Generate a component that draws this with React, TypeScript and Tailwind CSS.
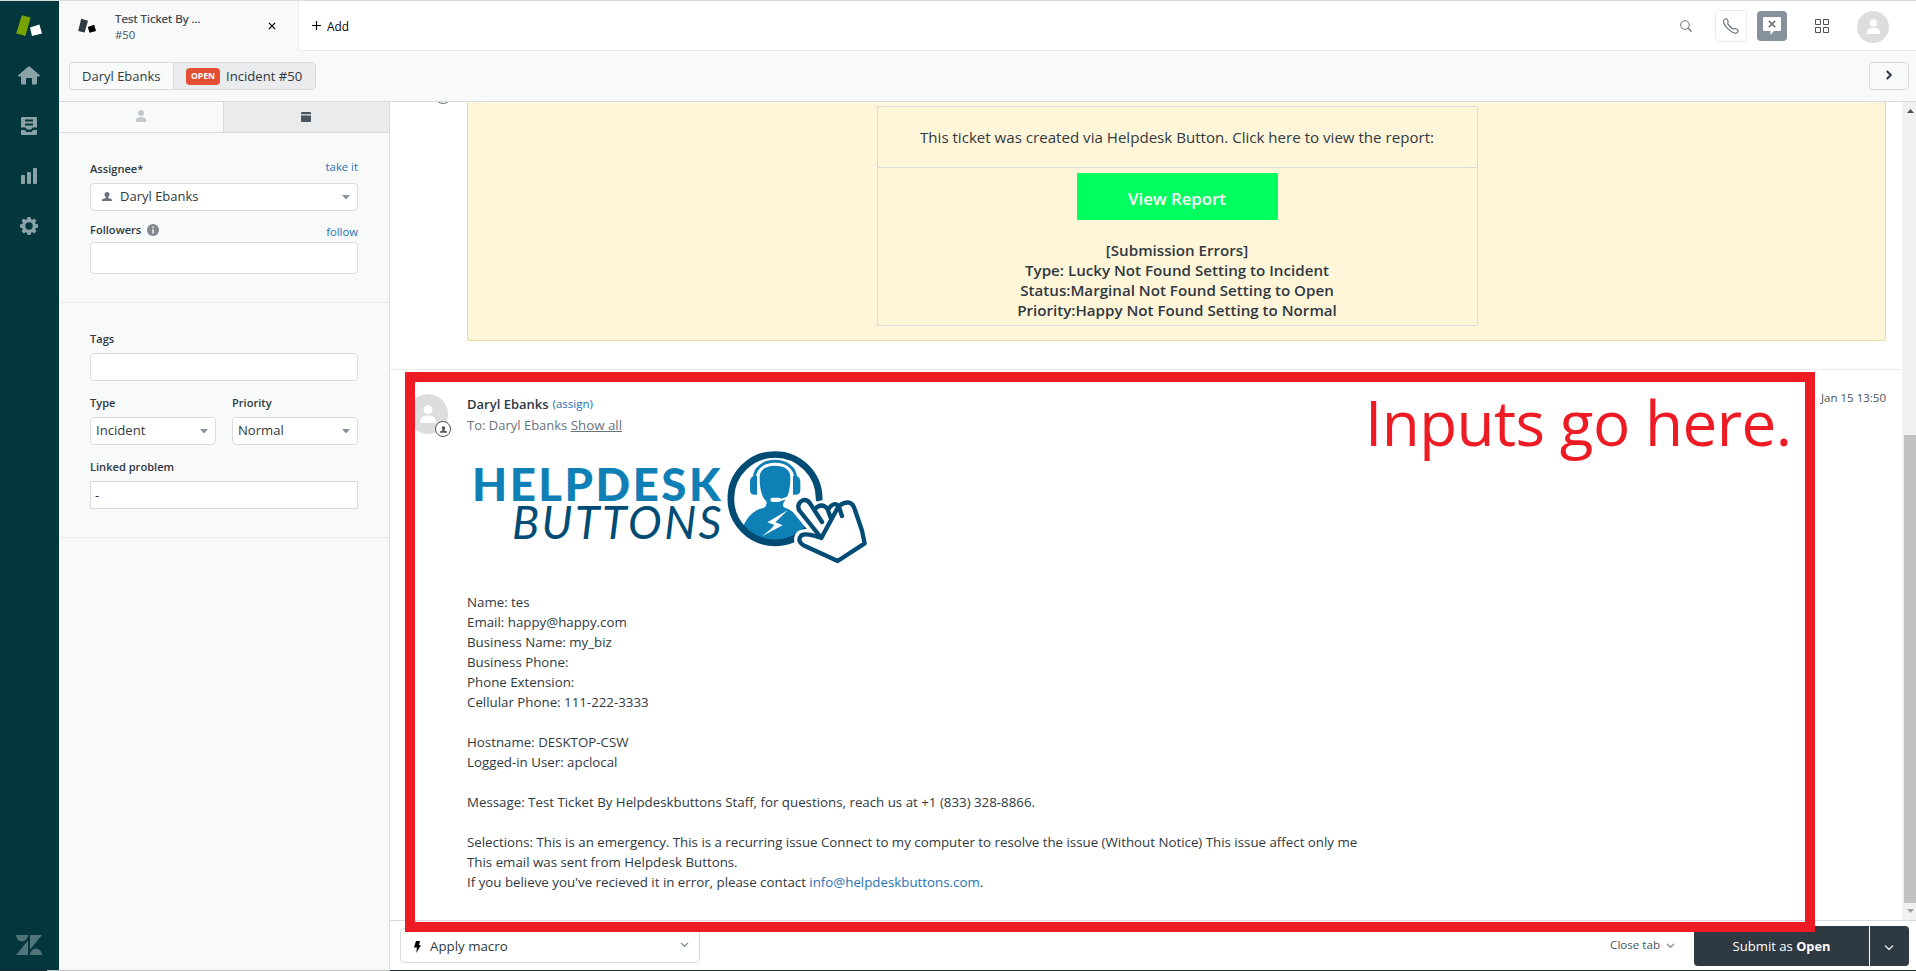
import React from 'react';

function Sidebar() {
  return (
    <nav className="flex w-[59px] shrink-0 flex-col items-center bg-[#03363d] pr-px">
      <svg className="mt-[13px] h-6 w-7 shrink-0" viewBox="15 14 28 24">
        <path d="M21.8 15.2 30.6 17.6 25.4 36 16.2 33.4z" fill="#78a300" />
        <path d="M30 27.5 39.4 24.6 42 33.4 32 36z" fill="#fff" />
      </svg>
      <svg className="mt-[26px] h-6 w-6 shrink-0" viewBox="0 0 24 24" fill="#8ba3a6">
        <path d="M12 2.5c.5 0 .9.2 1.3.5l9.2 8c.7.7.4 1.5-.6 1.5H20V19c0 .8-.6 1.5-1.500 1.500H15v-5.500c0-.6-.4-1-1-1h-4c-.6 0-1 .4-1 1v5.500H5.500C4.600 20.500 4 19.800 4 19v-6.500H2.100c-1 0-1.300-.8-.6-1.500l9.200-8c.4-.3.8-.5 1.300-.5z" />
      </svg>
      <svg className="mt-[26px] h-6 w-6 shrink-0" viewBox="0 0 24 24" fill="#8ba3a6">
        <path d="M5 3h14a1 1 0 0 1 1 1v9.500h-4.500l-1.500 2h-4l-1.500-2H4V4a1 1 0 0 1 1-1z" />
        <path d="M4 16h4l1.500 2h5l1.500-2h4v4a1 1 0 0 1-1 1H5a1 1 0 0 1-1-1z" />
        <path d="M8 5.500h8v2H8zM8 9.500h8v2H8z" fill="#03363d" />
      </svg>
      <svg className="mt-[25px] h-6 w-6 shrink-0" viewBox="0 0 24 24" fill="#8ba3a6">
        <rect x="4" y="12" width="4" height="9" rx="1" />
        <rect x="10" y="9" width="4" height="12" rx="1" />
        <rect x="16" y="5" width="4" height="16" rx="1" />
      </svg>
      <svg className="mt-[27px] h-6 w-6 shrink-0" viewBox="-12 -12 24 24">
        <g fill="#8ba3a6">
          {[0, 45, 90, 135].map((a) => (
            <path key={a} d="M-2.200 -6 -1.500 -9h3l.7 3v12l-.7 3h-3l-.7 -3z" transform={`rotate(${a})`} />
          ))}
        </g>
        <circle r="5.300" fill="#03363d" stroke="#8ba3a6" strokeWidth="3.200" />
      </svg>
      <svg className="mt-auto mb-[15px] h-5 w-[26px] shrink-0" viewBox="0 0 26 20" fill="#507479">
        <path d="M0 0h12a6 6.500 0 0 1-12 0zM14 0h12L14 14.500zM12 5.500V20H0zM14 20a6 6.500 0 0 1 12 0z" />
      </svg>
    </nav>
  );
}

function Person({ className }: { className: string }) {
  return (
    <svg className={className} viewBox="0 0 12 12" fill="currentColor">
      <circle cx="6" cy="3.100" r="3" />
      <path d="M.8 12v-1.600C.8 8.300 3 7 6 7s5.200 1.300 5.200 3.400V12z" />
    </svg>
  );
}

function Bust({ className }: { className: string }) {
  return (
    <svg className={className} viewBox="0 0 10 9" fill="currentColor">
      <path d="M5 0c1.600 0 2.500 1 2.500 2.500 0 1.200-.6 2-1.200 2.600v.8l3 1.100c.5.200.7.500.7 1V9H0V8c0-.5.2-.8.7-1l3-1.100v-.8C3.100 4.500 2.500 3.700 2.500 2.500 2.500 1 3.400 0 5 0z" />
    </svg>
  );
}

function Chevron({ className }: { className: string }) {
  return (
    <svg className={className} viewBox="0 0 10 6" fill="none" stroke="currentColor" strokeWidth="1.500" strokeLinecap="round" strokeLinejoin="round">
      <path d="M1.500 1 5 4.500 8.500 1" />
    </svg>
  );
}

function Caret() {
  return (
    <svg className="h-1 w-2 shrink-0" viewBox="0 0 8 4" fill="#87929d">
      <path d="M0 0h8L4.500 4h-1z" />
    </svg>
  );
}

function TopBar() {
  return (
    <header className="flex h-[50px] shrink-0">
      <div className="flex w-[239px] shrink-0 items-center bg-[#f8f9f9]">
        <svg className="ml-[18px] h-4 w-5 shrink-0" viewBox="77 17 20 16">
          <path d="M81.200 17.800 88 19.800 84.600 31.600 78.200 30z" fill="#2f3941" />
          <path d="M87.800 26 94.200 23.800 96 30 89.500 31.800z" fill="#000" />
        </svg>
        <div className="mt-px ml-[18px] w-[153px] leading-4">
          <div className="text-[11.6px] text-[#2f3941] [-webkit-text-stroke:0.2px]">Test Ticket By ...</div>
          <div className="text-[11.3px] text-[#49545c]">#50</div>
        </div>
        <svg className="h-2 w-2 shrink-0" viewBox="0 0 8 8" stroke="#000" strokeWidth="1.300">
          <path d="M.9.9 7.100 7.100M7.100.9.9 7.100" />
        </svg>
      </div>
      <div className="flex grow items-center border-b border-l border-[#e9ebed] bg-white">
        <svg className="ml-[13px] h-[9px] w-[9px]" viewBox="0 0 9 9" stroke="#000" strokeWidth="1.200">
          <path d="M4.500 0v9M0 4.500h9" />
        </svg>
        <span className="mt-0.5 ml-[6px] text-[11.8px] text-black">Add</span>
        <svg className="ml-auto h-3 w-3" viewBox="0 0 12 12" fill="none" stroke="#68737d">
          <circle cx="5" cy="5" r="4.300" />
          <path d="M8.200 8.200 11.500 11.500" strokeWidth="1.300" />
        </svg>
        <span className="ml-[23px] flex h-8 w-8 items-center justify-center rounded border border-[#e9ebed]">
          <svg className="h-4 w-4" viewBox="0 0 16 16" fill="none" stroke="#5c6970" strokeWidth="1.100">
            <path d="M.6 3.500C.6 2 2 .7 3 .7c.8 0 1 .5 1.700 1.600.6 1 .8 1.300.3 2.100-.5.700-.5 1 0 1.700 1.200 1.800 2.600 3.300 4.600 4.600.7.500 1 .5 1.700 0 .8-.5 1.200-.4 2.200.3 1.300.8 1.700 1 1.700 1.700 0 1-1.100 2.600-2.800 2.600-1.400 0-3.300-1-5.600-2.900C3.500 9.700.6 6.500.6 3.500z" />
          </svg>
        </span>
        <span className="ml-[10px] flex h-[30px] w-[30px] items-center justify-center rounded bg-[#87929d]">
          <svg className="h-[18px] w-[18px]" viewBox="0 0 18 18">
            <path d="M1 0h16a1 1 0 0 1 1 1v12a1 1 0 0 1-1 1h-6l-3.500 4v-4H1a1 1 0 0 1-1-1V1a1 1 0 0 1 1-1z" fill="#fff" />
            <path d="M5.800 3.800 12.200 10.200M12.200 3.800 5.800 10.200" stroke="#777" strokeWidth="1.700" />
          </svg>
        </span>
        <svg className="ml-7 h-[14px] w-[14px]" viewBox="0 0 14 14" fill="none" stroke="#49545c">
          <path d="M.5.5h5v5h-5zM8.500.5h5v5h-5zM.5 8.500h5v5h-5zM8.500 8.500h5v5h-5z" />
        </svg>
        <span className="mt-0.5 mr-[27px] ml-7 flex h-8 w-8 items-center justify-center rounded-full bg-[#dddddd] text-white">
          <Person className="h-[15px] w-[15px]" />
        </span>
      </div>
    </header>
  );
}

function Crumbs() {
  return (
    <div className="flex h-[51px] shrink-0 items-center border-b border-[#d8dcde] bg-[#f8f9f9] pr-[7px] pl-[10px] text-[#2f3941]">
      <div className="flex h-7 w-[247px] overflow-hidden rounded border border-[#d8dcde]">
        <div className="w-[104px] border-r border-[#d8dcde] pl-3 text-[13px] leading-[26px]">Daryl Ebanks</div>
        <div className="flex grow items-center bg-[#e9ebed] pl-3 text-[13.1px]">
          <span className="h-[17px] w-[34px] rounded bg-[#e34f32] text-center text-[8.6px] leading-[17px] font-bold text-white">OPEN</span>
          <span className="mt-px ml-[6px]">Incident #50</span>
        </div>
      </div>
      <div className="ml-auto flex h-7 w-10 items-center justify-center rounded border border-[#d8dcde]">
        <svg className="-mt-0.5 h-[10px] w-[6px]" viewBox="0 0 6 10" fill="none" stroke="#2f3941" strokeWidth="2">
          <path d="M.8 1 4.800 5 .8 9" />
        </svg>
      </div>
    </div>
  );
}

const label = 'text-[11.1px] leading-4 font-semibold text-[#2f3941]';
const box = 'flex h-7 items-center rounded border border-[#d8dcde] bg-white text-[13.1px] text-[#2f3941]';

function TicketPanel() {
  return (
    <aside className="flex w-[331px] shrink-0 flex-col border-r border-[#d8dcde] bg-[#f8f9f9]">
      <div className="flex h-[31px] shrink-0 border-b border-[#d8dcde]">
        <div className="flex w-[165px] items-center justify-center border-r border-[#d8dcde] text-[#c2c8cc]">
          <Person className="-mt-0.5 h-3 w-3" />
        </div>
        <div className="flex grow items-center justify-center bg-[#e9ebed] pr-0.5">
          <svg className="h-[10px] w-[10px]" viewBox="0 0 10 10" fill="#49545c">
            <path d="M1 0h8a1 1 0 0 1 1 1v1.300H0V1a1 1 0 0 1 1-1zM0 3.600h10V9a1 1 0 0 1-1 1H1a1 1 0 0 1-1-1z" />
          </svg>
        </div>
      </div>

      <section className="h-[170px] shrink-0 border-b border-[#e9ebed] px-[31px] pt-[26px]">
        <div className="flex h-6 justify-between">
          <span className={label + ' pt-[2px]'}>Assignee*</span>
          <span className="text-[11.3px] leading-4 text-[#1f73b7]">take it</span>
        </div>
        <div className={box + ' pr-[7px] pl-[11px]'}>
          <Bust className="-mt-px h-[9px] w-[10px] text-[#68737d]" />
          <span className="mr-auto ml-[8px] text-[13px]">Daryl Ebanks</span>
          <Caret />
        </div>
        <div className="flex h-[31px] pt-[11px]">
          <span className={label}>Followers</span>
          <svg className="mt-0.5 ml-[6px] h-3 w-3" viewBox="0 0 12 12">
            <circle cx="6" cy="6" r="6" fill="#82898e" />
            <path d="M5.200 2.500h1.700v1.500H5.200zM5.200 5.200h1.700v4.300H5.200z" fill="#e9ebed" />
          </svg>
          <span className="mt-0.5 ml-auto text-[11.3px] leading-4 text-[#1f73b7]">follow</span>
        </div>
        <div className="h-8 rounded border border-[#d8dcde] bg-white" />
      </section>

      <section className="h-[235px] shrink-0 border-b border-[#e9ebed] px-[31px] pt-[28px]">
        <div className={label + ' h-[22px]'}>Tags</div>
        <div className={box} />
        <div className="mt-[14px] grid grid-cols-2 gap-4">
          <div>
            <div className={label + ' h-[22px]'}>Type</div>
            <div className={box + ' justify-between pr-[7px] pl-[5px]'}>Incident<Caret /></div>
          </div>
          <div>
            <div className={label + ' h-[22px]'}>Priority</div>
            <div className={box + ' justify-between pr-[7px] pl-[5px]'}>Normal<Caret /></div>
          </div>
        </div>
        <div className={label + ' mt-[14px] h-[22px]'}>Linked problem</div>
        <div className="flex h-7 items-center border border-[#d8dcde] bg-white pt-0.5 pl-1 text-[13px] text-[#2f3941]">-</div>
      </section>
    </aside>
  );
}

function HelpdeskLogo() {
  return (
    <svg className="block h-[125px] w-[400px]" viewBox="467 440 400 125">
      <text x="472" y="501" fontFamily="Lato, sans-serif" fontWeight="900" fontSize="45.500" letterSpacing="2.5" fill="#0f80b6" textLength="251" lengthAdjust="spacingAndGlyphs">HELPDESK</text>
      <text x="512" y="538.500" fontFamily="Lato, sans-serif" fontStyle="italic" fontSize="46" letterSpacing="2.5" fill="#004c74" textLength="212" lengthAdjust="spacingAndGlyphs">BUTTONS</text>
      <g transform="translate(660 440) scale(.33333)">
        <circle cx="345" cy="176" r="132" fill="#fff" />
        <path d="M246 266C262 228 282 210 312 203 Q322 198 319 184 C306 172 299 150 299 112 C299 88 318 77 345 77 C372 77 391 88 391 112 C391 150 384 172 372 186 Q366 196 372 202 C398 210 412 226 440 266 C412 300 380 312 345 312 C305 312 268 298 246 266z" fill="#0f80b6" />
        <path d="M283 118C280 46 410 46 407 118" fill="none" stroke="#0f80b6" strokeWidth="9" />
        <path d="M291 108v56h-8q-13 0-13-14v-24q0-14 10-18zM399 108v56h8q14 0 14-14v-24q0-14-10-18z" fill="#0f80b6" />
        <path d="M394 160Q384 178 358 180" fill="none" stroke="#fff" strokeWidth="6" />
        <rect x="331" y="173" width="32" height="13" rx="6.500" fill="#fff" />
        <path d="M383 211 322 247 343 255 332 268 306 289 368 256 346 247z" fill="#fff" />
        <circle cx="345" cy="176" r="132.500" fill="none" stroke="#004c74" strokeWidth="20" />
        <path d="M484 294 416 212Q410 190 428 181Q442 177 452 190L470 204Q490 190 508 202Q528 184 543 192Q575 178 584 210L606 272 614 310 533 363 430 316Q410 300 424 286Q440 277 484 294z" fill="#fff" stroke="#fff" strokeWidth="32" />
        <path d="M484 294 417 210Q410 190 428 181Q440 177 450 190L486 246M464 208Q484 186 502 206L514 238M506 206Q526 180 538 204L546 228M536 198Q574 172 585 210L606 272 614 310 533 363 430 316Q410 302 424 286Q440 277 484 294z" fill="none" stroke="#004c74" strokeWidth="13" strokeLinejoin="round" strokeLinecap="round" />
      </g>
    </svg>
  );
}

const lines = [
  'Name: tes',
  'Email: happy@happy.com',
  'Business Name: my_biz',
  'Business Phone:',
  'Phone Extension:',
  'Cellular Phone: 111-222-3333',
  '',
  'Hostname: DESKTOP-CSW',
  'Logged-in User: apclocal',
  '',
  'Message: Test Ticket By Helpdeskbuttons Staff, for questions, reach us at +1 (833) 328-8866.',
  '',
  'Selections: This is an emergency. This is a recurring issue Connect to my computer to resolve the issue (Without Notice) This issue affect only me',
  'This email was sent from Helpdesk Buttons.',
];

function Conversation() {
  return (
    <div className="flex h-[818px] overflow-hidden">
      <div className="flex grow flex-col">
        <div className="flex h-[268px] shrink-0 border-b border-[#e9ebed]">
          <div className="relative w-[77px] shrink-0">
            <span className="absolute -top-[14px] left-[45px] h-4 w-4 rounded-full border border-[#68737d]" />
          </div>
          <div className="flex h-[239px] w-[1419px] justify-center rounded-b-[3px] border border-t-0 border-[#ebd99c] bg-[#fff5d9] pt-1 pl-px">
            <div className="h-[220px] w-[601px] border border-[#d8dcde] text-center text-[#2f3941]">
              <div className="h-[61px] border-b border-[#d8dcde] pt-5 text-[15.1px] leading-5">
                This ticket was created via Helpdesk Button. Click here to view the report:
              </div>
              <div className="mx-auto mt-[5px] h-[47px] w-[201px] bg-[#00ff5f] text-[16.8px] leading-[51px] font-semibold text-white">View Report</div>
              <div className="mt-5 text-[15.15px] leading-5 font-semibold">
                <div>[Submission Errors]</div>
                <div>Type: Lucky Not Found Setting to Incident</div>
                <div>Status:Marginal Not Found Setting to Open</div>
                <div>Priority:Happy Not Found Setting to Normal</div>
              </div>
            </div>
          </div>
        </div>

        <div className="flex">
          <div className="w-[77px] shrink-0 pt-[24px] pl-[18px]">
            <div className="relative flex h-10 w-10 items-end justify-center rounded-full bg-[#dddddd] pb-[11px] text-white">
              <Person className="h-[18px] w-[18px]" />
              <span className="absolute top-[27px] left-[27px] flex h-4 w-4 items-center justify-center rounded-full border border-[#555] bg-white text-[#555]">
                <Bust className="h-[7px] w-[7px]" />
              </span>
            </div>
          </div>
          <div className="grow pt-[24px] text-[13.3px] text-[#2f3941]">
            <div className="flex h-5 items-center leading-4">
              <span className="text-[13px] font-semibold">Daryl Ebanks</span>
              <span className="ml-1 text-[11.5px] text-[#1f73b7]">(assign)</span>
            </div>
            <div className="mt-px h-5 text-[13px] leading-5 text-[#68737d]">
              To: Daryl Ebanks <span className="text-[13.3px] underline">Show all</span>
            </div>
            <div className="mt-[5px] h-[152px]">
              <HelpdeskLogo />
            </div>
            <div className="leading-5 whitespace-pre">
              {lines.map((l, i) => (
                <div key={i} className="h-5">{l}</div>
              ))}
              <div>
                If you believe you've recieved it in error, please contact <span className="text-[#1f73b7]">info@helpdeskbuttons.com</span>.
              </div>
            </div>
          </div>
          <div className="shrink-0 pt-[20px] pr-4 text-[11.5px] leading-4 text-[#49545c]">Jan 15 13:50</div>
        </div>
      </div>

      <div className="flex w-[14px] shrink-0 flex-col items-center bg-[#f1f1f1] pl-0.5">
        <svg className="mt-[7px] h-1 w-[7px]" viewBox="0 0 7 4" fill="#505050"><path d="M3.500 0 7 4H0z" /></svg>
        <div className="mt-[322px] h-[468px] w-3 bg-[#c1c1c1]" />
        <svg className="mt-[6px] h-1 w-[7px]" viewBox="0 0 7 4" fill="#a0a0a0"><path d="M0 0h7L3.500 4z" /></svg>
      </div>
    </div>
  );
}

function Footer() {
  return (
    <footer className="flex h-[50px] items-start border-t border-[#d8dcde] bg-white pr-[7px] pl-[10px]">
      <div className="mt-[7px] flex h-[35px] w-[300px] items-center rounded border border-[#d8dcde] px-[10px]">
        <svg className="mt-0.5 mr-[9px] ml-[3px] h-3 w-[7px]" viewBox="0 0 7 12" fill="#000">
          <path d="M2 0h4L5 4.200h2L2.200 12l.8-5.500H0z" />
        </svg>
        <span className="mt-0.5 text-[13.3px] text-[#2f3941]">Apply macro</span>
        <Chevron className="-mt-0.5 ml-auto h-[6px] w-[9px] text-[#87929d]" />
      </div>
      <span className="mt-[16px] ml-auto text-[11.6px] leading-4 text-[#49545c]">Close tab</span>
      <Chevron className="mt-[22px] mr-[19px] ml-[6px] h-[6px] w-[9px] text-[#87929d]" />
      <div className="mt-[5px] h-10 w-[175px] rounded-l bg-[#2f3941] text-center text-[13.1px] leading-10 text-white">
        Submit as <span className="text-[12.8px] font-bold">Open</span>
      </div>
      <div className="mt-[5px] ml-px flex h-10 w-[39px] items-center justify-center rounded-r bg-[#2f3941] pr-px text-[#d8dcde]">
        <Chevron className="mt-1 h-[6px] w-[10px]" />
      </div>
    </footer>
  );
}

export default function App() {
  return (
    <div className="relative flex h-[971px] w-[1916px] flex-col overflow-hidden bg-white font-['Open_Sans',sans-serif]">
      <div className="h-px bg-[#d8dcde]" />
      <div className="flex h-[969px]">
        <Sidebar />
        <div className="flex grow flex-col">
          <TopBar />
          <Crumbs />
          <div className="flex grow">
            <TicketPanel />
            <main className="flex w-[1526px] flex-col">
              <Conversation />
              <Footer />
            </main>
          </div>
        </div>
      </div>
      <div className="flex h-px">
        <div className="w-[47px] bg-[#20262b]" />
        <div className="w-[343px] bg-[#bfc1c1]" />
        <div className="grow bg-[#1c2f36]" />
      </div>
      <div className="absolute top-[372px] left-[405px] h-[560px] w-[1410px] border-[10px] border-[#ed1c24]" />
      <div className="absolute top-[382px] left-[1365px] text-[62px] leading-[80px] tracking-[-0.6px] whitespace-nowrap text-[#ed1c24]">
        Inputs go here.
      </div>
    </div>
  );
}
